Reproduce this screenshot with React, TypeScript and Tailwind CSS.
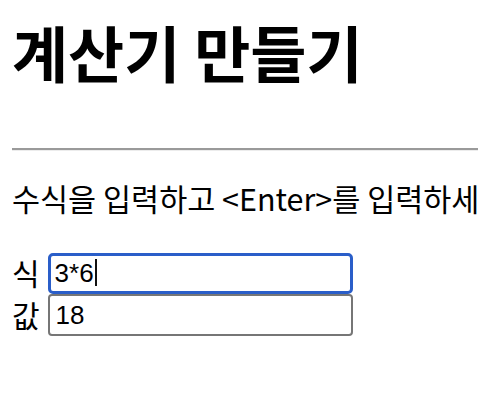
import { useState } from 'react';

const korean = '"Noto Sans CJK KR", "Noto Sans", sans-serif';
const arial = '"Liberation Sans", Arial, sans-serif';

export default function App() {
  const [expr, setExpr] = useState('3*6');
  const [result, setResult] = useState('18');

  const handleKeyDown = (e: React.KeyboardEvent<HTMLInputElement>) => {
    if (e.key !== 'Enter') return;
    try {
      // eslint-disable-next-line no-new-func
      const value = Function(`"use strict"; return (${expr});`)();
      setResult(String(value));
    } catch {
      setResult('오류');
    }
  };

  return (
    <div className="w-[478px] h-[402px] overflow-hidden bg-white px-3 text-black" style={{ fontFamily: korean }}>
      <h1 className="pt-[22px] text-[61px] font-bold leading-[60px] whitespace-nowrap">계산기 만들기</h1>

      <hr className="mt-[66px] w-[500px] border-0 border-t-2 border-t-[#9a9a9a] border-b border-b-[#ececec]" />

      <p className="mt-[29px] text-[30.5px] leading-[36px] whitespace-nowrap">수식을 입력하고 &lt;Enter&gt;를 입력하세요</p>

      <div className="mt-[37px] flex flex-col">
        <label className="flex items-start gap-[8px] text-[30px]">
          <span className="leading-[38px]">식</span>
          <div className="relative flex">
            <input
              value={expr}
              onChange={(e) => setExpr(e.target.value)}
              onKeyDown={handleKeyDown}
              className="w-[305px] h-[41px] rounded-[5px] border-[3px] border-[#2a5ec9] px-[4px] text-[26px] text-black outline-none"
              style={{ fontFamily: arial }}
            />
            {/* caret */}
            <div
              className="pointer-events-none absolute left-[7px] top-[6px] flex items-center text-[26px] leading-[27px] text-transparent"
              style={{ fontFamily: arial }}
            >
              {expr}
              <span className="ml-[1px] inline-block w-[2px] h-[27px] bg-[#111]" />
            </div>
          </div>
        </label>
        <label className="flex items-start gap-[8px] text-[30px]">
          <span className="leading-[40px]">값</span>
          <input
            readOnly
            value={result}
            className="w-[305px] h-[42px] rounded-[4px] border-2 border-[#767676] px-[6px] text-[26px] text-black outline-none"
            style={{ fontFamily: arial }}
          />
        </label>
      </div>
    </div>
  );
}
